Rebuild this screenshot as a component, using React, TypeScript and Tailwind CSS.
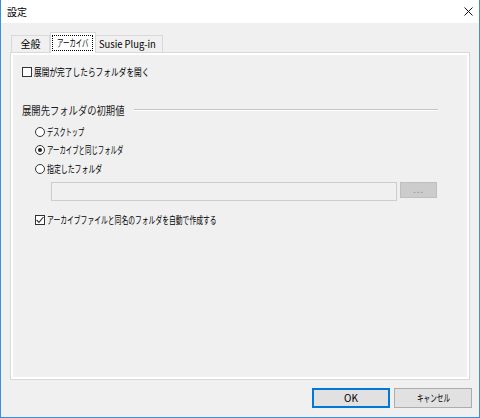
import React from "react";

function T({ children, cls }: { children: React.ReactNode; cls: string }) {
  return <span className={`inline-block whitespace-nowrap ${cls}`}>{children}</span>;
}

function CheckBox({ checked }: { checked?: boolean }) {
  return (
    <span className="w-[10px] h-[10px] border border-[#333333] bg-white shrink-0 flex items-center justify-center">
      {checked && (
        <svg width="8" height="8" viewBox="0 0 8 8">
          <path d="M0.6 4 L3 6.4 L7.4 1" fill="none" stroke="#333333" strokeWidth="1.1" />
        </svg>
      )}
    </span>
  );
}

function Radio({ checked }: { checked?: boolean }) {
  return (
    <span className="w-[10px] h-[10px] rounded-full border border-[#333333] bg-white shrink-0 flex items-center justify-center">
      {checked && <span className="w-[4px] h-[4px] rounded-full bg-[#222222]" />}
    </span>
  );
}

export default function App() {
  return (
    <div className="w-[480px] h-[418px] flex flex-col border-x border-b border-[#3c8fdc] bg-[#f0f0f0] font-['Noto_Sans_CJK_JP',sans-serif] text-[10px] leading-[12px] text-black overflow-hidden">
      {/* title bar */}
      <div className="h-[23px] shrink-0 bg-white flex items-center pl-[6px] pr-[6px]">
        <span>設定</span>
        <div className="flex-1" />
        <svg width="9" height="9" viewBox="0 0 9 9">
          <path d="M0.5 0.5 L8.5 8.5 M8.5 0.5 L0.5 8.5" stroke="#111111" strokeWidth="1" />
        </svg>
      </div>

      {/* body */}
      <div className="flex-1 flex flex-col px-[9px] pt-[9px] pb-[9px]">
        {/* tabs */}
        <div className="h-[20px] flex items-end pl-[1px] relative z-10">
          <div className="w-[39px] h-[17px] border border-b-0 border-[#d9d9d9] bg-[#f0f0f0] flex items-center justify-center">
            <span>全般</span>
          </div>
          <div className="w-[46px] h-[21px] -mb-px border border-b-0 border-[#d9d9d9] bg-white pt-[2px] pl-[1px] pr-[2px] pb-[2px] flex">
            <div className="flex-1 border border-dotted border-black flex items-center pl-[4px]">
              <span className="w-[32px] shrink-0 overflow-visible">
                <T cls="origin-left scale-x-[0.64]">アーカイバ</T>
              </span>
            </div>
          </div>
          <div className="w-[67px] h-[17px] border border-b-0 border-l-0 border-[#d9d9d9] bg-[#f0f0f0] flex items-center pl-[3px]">
            <span className="w-[60px] shrink-0">
              <T cls="origin-left scale-x-[0.94]">Susie Plug-in</T>
            </span>
          </div>
        </div>

        {/* panel */}
        <div className="h-[328px] shrink-0 border border-[#d9d9d9] bg-white p-[2px] flex">
          <div className="flex-1 bg-[#f0f0f0] flex flex-col pl-[9px]">
            <div className="mt-[11px] h-[12px] flex items-center gap-[2px]">
              <CheckBox />
              <T cls="origin-left scale-x-[0.77]">展開が完了したらフォルダを開く</T>
            </div>

            <div className="mt-[25px] h-[14px] flex items-center">
              <div className="w-[112px] shrink-0 flex items-center">
                <T cls="origin-left scale-x-[0.81] text-[11.5px] leading-[14px] text-[#1a1a1a]">展開先フォルダの初期値</T>
              </div>
              <div className="w-[304px] h-[2px] border-t border-[#c6c6c6] border-b border-b-white" />
            </div>

            <div className="pl-[13px] flex flex-col">
              <div className="mt-[9px] h-[12px] flex items-center gap-[2px]">
                <Radio />
                <T cls="origin-left scale-x-[0.62]">デスクトップ</T>
              </div>
              <div className="mt-[6px] h-[12px] flex items-center gap-[2px]">
                <Radio checked />
                <T cls="origin-left scale-x-[0.64]">アーカイブと同じフォルダ</T>
              </div>
              <div className="mt-[7px] h-[12px] flex items-center gap-[2px]">
                <Radio />
                <T cls="origin-left scale-x-[0.69]">指定したフォルダ</T>
              </div>

              <div className="mt-[7px] flex items-start pl-[16px]">
                <div className="w-[346px] h-[19px] border border-[#cccccc] bg-[#f0f0f0]" />
                <div className="ml-[3px] w-[37px] h-[16px] border border-[#bfbfbf] bg-[#cccccc] flex items-end justify-center pb-[2px]">
                  <span className="text-[9px] leading-[10px] text-[#8a8a8a] tracking-[1px]">...</span>
                </div>
              </div>

              <div className="mt-[13px] h-[12px] flex items-center gap-[2px]">
                <CheckBox checked />
                <T cls="origin-left scale-x-[0.68]">アーカイブファイルと同名のフォルダを自動で作成する</T>
              </div>
            </div>
          </div>
        </div>

        {/* buttons */}
        <div className="mt-[8px] h-[20px] flex justify-end gap-[4px] -mr-[2px]">
          <div className="w-[78px] h-[20px] border-2 border-[#0078d7] bg-[#e1e1e1] flex items-center justify-center">
            <span>OK</span>
          </div>
          <div className="w-[78px] h-[20px] border border-[#adadad] bg-[#e1e1e1] flex items-center justify-center">
            <span className="w-[33px] shrink-0">
              <T cls="origin-left scale-x-[0.66]">キャンセル</T>
            </span>
          </div>
        </div>
      </div>
    </div>
  );
}
